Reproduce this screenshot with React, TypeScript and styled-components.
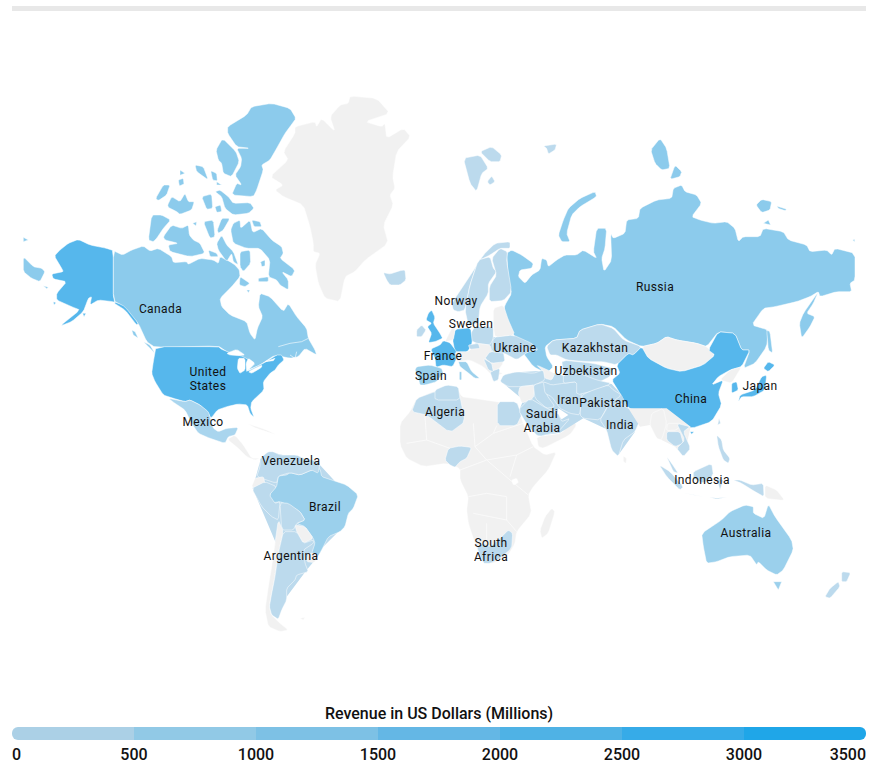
import React from "react";
import styled, { createGlobalStyle } from "styled-components";

const Global = createGlobalStyle`
  html, body { margin: 0; padding: 0; background: #fff; }
  body { font-family: Roboto, "Liberation Sans", sans-serif; }
`;

const Page = styled.main`
  width: 875px;
  height: 767px;
  overflow: hidden;
  display: flex;
  flex-direction: column;
`;
const TopBar = styled.div`
  height: 5px;
  margin: 6px 9px 0 12px;
  background: #e8e8e8;
  flex: none;
`;
const MapSvg = styled.svg`
  display: block;
  width: 875px;
  height: 693px;
  flex: none;
`;
const Land = styled.polygon<{ $tone: string }>`
  fill: ${(p) => p.$tone};
  stroke: #fff;
  stroke-width: 0.5;
  stroke-linejoin: round;
  vector-effect: non-scaling-stroke;
`;
const Backing = styled.polygon<{ $tone: string }>`
  fill: ${(p) => p.$tone};
`;
const Border = styled.polyline`
  fill: none;
  stroke: #fff;
  stroke-width: 0.6;
  vector-effect: non-scaling-stroke;
`;
const Label = styled.text`
  font-family: Roboto, sans-serif;
  font-size: 12px;
  letter-spacing: 0.4px;
  fill: #111;
  text-anchor: middle;
`;
const Legend = styled.section`
  display: flex;
  flex-direction: column;
  padding: 0 9px 0 12px;
  color: #111;
  font-weight: 500;
  font-size: 16px;
`;
const LegendTitle = styled.div`
  text-align: center;
  line-height: 20px;
  margin-bottom: 3px;
`;
const Scale = styled.div`
  display: flex;
  height: 13px;
  border-radius: 6px;
  overflow: hidden;
`;
const Step = styled.div<{ $tone: string }>`
  flex: 1;
  background: ${(p) => p.$tone};
`;
const Ticks = styled.div`
  display: flex;
  justify-content: space-between;
  margin-top: 5px;
  line-height: 19px;
`;
const Tick = styled.div<{ $align: string }>`
  width: 0;
  display: flex;
  justify-content: ${(p) => p.$align};
  white-space: nowrap;
`;

const CA = "#8ccbec";
const US = "#56b7ec";
const LT = "#bcdaed";
const BR = "#9bd0ec";
const MX = "#a9d5ee";
const GR = "#f1f1f1";
const WH = "#ffffff";

type Shape = [string, string];
type Frame = { x: number; y: number; backing?: Shape[]; shapes: Shape[]; lines?: string[] };

const frames: Frame[] = [
  {
    x: 0,
    y: 80,
    shapes: [
      [GR, "810,290 865,240 850,215 885,160 885,140 945,125 950,140 965,115 1005,155 990,110 1020,75 1045,70 1050,48 1130,55 1170,100 1095,125 1145,140 1155,130 1160,175 1210,145 1232,170 1190,215 1178,290 1185,325 1170,345 1180,375 1150,435 1165,490 1095,540 1065,575 1035,590 1020,665 975,655 955,610 945,555 960,520 940,515 940,490 930,440 910,375 850,350 825,330 850,315"],
      [US, "340,512 320,505 270,495 235,478 205,490 180,510 163,528 185,565 190,575 155,582 160,597 200,605 170,640 170,660 215,680 240,690 180,738 215,725 250,695 265,655 275,650 270,675 295,660 340,665 385,678 415,730 410,735 375,690 340,668"],
      [US, "248,700 258,700 252,710"],
      [US, "160,665 168,668 162,674"],
      [CA, "70,530 100,560 125,565 135,575 120,605 95,595 70,575"],
      [CA, "70,472 85,480 70,485"],
      [CA, "130,617 145,622 140,626"],
      [CA, "340,512 368,525 395,510 430,498 450,513 475,505 515,530 520,548 560,545 565,553 600,535 640,540 655,550 660,530 690,545 705,555 718,570 720,590 695,620 660,655 665,680 690,705 740,725 750,760 765,780 772,745 788,710 775,680 780,640 810,650 850,695 865,670 890,710 920,745 925,775 945,810 950,825 915,805 895,830 870,835 825,825 780,855 745,870 720,840 680,815 655,798 465,802 440,785 415,730 375,680 340,662"],
      [CA, "395,750 405,755 415,775 400,765"],
      [CA, "430,785 450,795 465,820 445,800"],
      [CA, "683,140 740,105 755,80 815,70 870,85 888,115 870,140 855,160 830,205 810,240 785,255 790,270 770,330 760,350 695,345 710,310 725,315 705,285 722,260 725,235 710,205 750,205 710,200 683,160"],
      [CA, "648,210 668,175 708,215 718,245 695,290 670,280 665,250 655,240"],
      [CA, "585,255 610,260 625,300 590,275"],
      [CA, "632,272 650,280 652,303 638,300"],
      [CA, "650,305 665,315 650,315"],
      [CA, "540,270 555,280 540,286"],
      [CA, "535,300 550,295 552,312 538,318"],
      [CA, "467,355 490,315 510,315 500,345 475,362"],
      [CA, "503,375 515,350 540,365 555,340 565,365 583,365 575,390 540,403 530,395 505,382"],
      [CA, "605,350 635,342 638,385 620,388"],
      [CA, "645,380 662,375 665,395 650,397"],
      [CA, "645,335 660,330 685,350 700,370 750,368 762,385 745,400 700,405 675,385 665,350"],
      [CA, "445,480 455,405 485,405 512,420 490,445 470,475 460,485"],
      [CA, "490,470 515,435 545,445 565,435 568,465 580,480 600,490 615,520 570,530 510,515 505,495 535,490 495,480"],
      [CA, "578,430 590,425 588,438"],
      [CA, "610,425 640,420 645,470 630,475"],
      [CA, "652,450 665,415 690,415 670,450 655,460"],
      [CA, "650,490 665,465 680,495 700,515 715,555 700,545 695,520 680,545 655,510"],
      [CA, "720,515 750,510 752,550 730,575 720,560"],
      [CA, "625,510 650,520 655,530 630,530"],
      [CA, "692,450 700,430 720,420 722,445 750,420 758,458 785,445 815,480 845,500 850,520 840,535 885,570 875,590 845,575 865,600 865,630 840,615 830,600 805,590 810,540 780,505 740,505 700,490"],
      [CA, "755,420 780,425 785,440 762,440"],
      [CA, "782,545 795,540 795,558 785,560"],
      [CA, "720,590 750,610 735,620 718,615"],
      [CA, "740,630 750,630 745,638"],
      [CA, "775,595 805,590 805,605 775,605"],
    ],
    lines: ["835,800 870,790 905,785", "870,825 885,835 890,815", "925,775 905,785"],
  },
  {
    x: 130,
    y: 340,
    shapes: [
      [US, "78,20 265,20 275,28 300,38 340,50 375,70 350,95 400,70 440,45 455,45 462,60 445,75 435,90 420,100 400,125 402,150 365,185 362,205 372,232 360,220 352,195 325,192 290,200 262,210 243,235 232,215 210,195 180,180 165,185 130,175 100,165 75,125 65,100 70,65"],
      [MX, "115,175 165,185 180,180 210,195 235,215 243,240 250,265 265,275 290,265 325,262 315,285 295,290 285,310 240,295 205,280 185,250 165,210 135,190"],
      [WH, "128,185 150,215 170,242 150,225"],
      [WH, "290,40 320,28 345,45 325,47 300,45"],
      [WH, "325,55 345,55 345,90 330,100 322,85"],
      [WH, "355,55 375,70 355,90 350,95 348,70"],
      [WH, "355,95 395,75 395,82 365,100"],
      [WH, "405,65 435,55 430,62"],
    ],
  },
  {
    x: 140,
    y: 380,
    backing: [[LT, "338,325 362,238 400,218 535,250 600,320 640,350 610,440 540,510 525,540 500,570 440,650 415,712 398,700 408,490"]],
    shapes: [
      [GR, "262,178 285,165 310,195 335,235 360,235 345,240 320,230 295,205"],
      [GR, "320,130 380,150 410,165 350,145"],
      [BR, "415,288 440,285 450,278 480,285 515,270 540,265 545,290 575,300 620,315 655,345 640,385 625,400 615,440 600,455 565,470 545,510 525,545 515,520 525,490 520,475 495,440 470,430 495,420 480,395 445,375 420,365 400,368 388,350 395,330 410,320"],
      [LT, "360,235 385,215 400,215 420,225 470,225 490,235 540,245 535,280 515,270 480,285 450,278 415,288 410,310 350,290 360,260"],
      [GR, "335,320 345,295 370,290 375,310 350,325"],
      [LT, "335,325 375,305 410,320 388,345 405,370 420,365 415,420 395,410 365,380"],
      [LT, "420,368 445,370 480,395 495,420 470,430 460,450 425,450"],
      [GR, "465,435 495,440 520,475 490,490 470,455"],
      [GR, "505,520 530,520 525,548 500,545"],
      [GR, "415,420 430,455 415,520 405,590 395,640 388,680 395,705 420,730 445,750 420,755 385,740 375,690 385,620 395,560 405,490"],
      [LT, "430,455 470,455 490,490 520,480 520,490 490,510 495,550 505,575 470,585 465,600 440,625 440,660 425,690 415,718 395,705 388,680 395,640 405,590 415,520"],
      [GR, "830,55 880,35 950,18 965,50 1000,55 1070,65 1130,75 1150,130 1180,200 1215,225 1250,215 1225,270 1180,320 1165,345 1175,400 1130,455 1125,490 1105,525 1060,550 1030,550 1005,490 985,430 980,390 985,350 960,300 960,265 920,250 850,260 800,235 780,195 780,130 810,95"],
      [LT, "815,95 830,55 885,35 950,18 960,50 975,125 930,158 860,105"],
      [LT, "1072,65 1130,65 1145,105 1130,137 1072,137"],
      [LT, "925,205 960,198 995,202 980,235 960,245 945,262 930,255 915,240"],
      [LT, "1085,470 1105,450 1118,460 1115,505 1080,535 1050,550 1030,550 1010,500 1030,490 1050,500"],
      [GR, "1235,385 1245,395 1225,460 1205,475 1200,450 1215,410"],
      [WH, "1115,300 1130,295 1135,308 1120,315"],
      [GR, "1190,170 1265,160 1295,120 1310,135 1290,165 1210,205 1195,200"],
      [GR, "480,715 495,712 490,720"],
    ],
    lines: [
      "855,110 860,180 800,190",
      "860,180 930,205",
      "1000,130 1005,200 1060,160 1070,137",
      "1005,200 1040,240 1130,225 1180,200",
      "960,270 1040,240 1110,300 1165,345",
      "985,350 1040,340 1100,350 1100,420 1130,455",
      "1000,400 1100,420",
      "1040,430 1040,490",
      "1130,225 1110,290",
      "1060,160 1150,130",
    ],
  },
  {
    x: 380,
    y: 120,
    shapes: [
      [CA, "370,575 375,555 395,520 385,480 380,400 395,390 425,405 460,430 455,445 420,450 415,470 435,490 455,465 480,450 485,415 500,420 505,440 530,420 555,405 590,405 610,390 650,415 640,395 650,325 680,325 675,385 665,415 672,455 695,420 692,340 700,355 735,340 740,300 775,295 780,265 830,240 875,235 880,205 905,195 915,215 950,225 965,250 935,290 960,300 1000,310 1040,305 1065,325 1075,365 1090,350 1140,350 1150,325 1210,335 1225,360 1280,375 1290,395 1340,390 1355,405 1365,385 1425,400 1425,480 1410,490 1415,515 1370,515 1320,530 1315,515 1290,530 1250,545 1185,560 1150,565 1115,615 1165,630 1160,680 1125,730 1090,745 1110,690 1085,690 1065,640 1015,635 980,680 950,670 890,660 860,650 830,670 785,680 740,660 700,620 660,612 600,630 590,655 520,660 495,680 500,710 520,740 500,760 460,740 430,700 400,640 370,620"],
      [CA, "1315,515 1300,550 1280,580 1305,590 1290,620 1265,655 1258,610 1270,580"],
      [CA, "1160,630 1170,635 1178,700 1165,690"],
      [CA, "535,345 550,300 565,265 600,235 645,215 650,230 600,260 575,285 560,340 570,365 545,365"],
      [CA, "812,90 840,55 860,85 870,145 845,150 825,130"],
      [CA, "870,178 885,135 905,155 900,170"],
      [CA, "1128,255 1145,238 1175,245 1170,270 1145,278"],
      [CA, "1190,258 1220,268 1215,272 1195,265"],
      [CA, "1150,310 1165,300 1172,315"],
      [CA, "1418,360 1424,358 1424,366"],
      [LT, "250,115 300,105 325,145 305,160 290,215 270,190"],
      [LT, "300,95 335,80 365,105 360,125 330,125"],
      [LT, "322,185 335,168 345,185 330,195"],
      [LT, "490,78 530,72 525,90 505,102 500,85"],
      [LT, "10,458 30,462 60,452 75,450 78,480 60,495 30,495 20,480"],
      [LT, "500,680 520,660 590,655 600,630 660,612 700,625 730,660 785,680 760,705 745,700 710,735 670,725 620,725 560,720 530,705 510,705"],
      [LT, "545,720 640,730 700,745 690,770 650,790 600,770 560,770 550,760"],
      [GR, "785,680 830,670 860,650 890,660 950,670 980,680 1005,705 970,735 905,755 860,745 805,715"],
      [US, "1015,635 1065,640 1085,690 1110,690 1085,740 1050,750 1015,770 995,795 1030,780 1015,820 1025,855 995,905 935,925 910,910 860,915 860,875 790,875 745,865 720,820 695,780 720,760 710,735 745,700 760,705 785,680 805,715 860,745 905,755 970,735 1005,705 985,690"],
      [GR, "1020,780 1050,750 1085,740 1055,790"],
      [US, "1055,790 1070,785 1075,810 1055,820"],
      [US, "1150,745 1165,725 1185,735 1165,755"],
      [US, "1145,770 1160,765 1155,810 1120,830 1085,830 1075,845 1080,825 1125,810"],
      [US, "930,935 942,935 935,943"],
    ],
  },
  {
    x: 480,
    y: 340,
    backing: [
      [LT, "70,130 110,97 190,92 250,107 395,132 425,165 445,205 465,275 415,345 385,270 310,235 240,278 175,288 118,210 130,180"],
      [WH, "235,205 265,225 245,238 232,222"],
    ],
    shapes: [
      [GR, "170,75 225,100 215,120 195,115 185,90"],
      [LT, "60,125 70,105 110,95 160,100 190,90 195,120 165,135 120,140 85,140"],
      [GR, "120,140 165,135 160,175 125,190 115,160"],
      [LT, "160,135 195,125 200,165 225,200 200,205 165,175"],
      [LT, "190,125 215,135 250,130 290,125 305,165 300,225 270,220 240,205 215,170 195,160"],
      [LT, "250,105 300,100 350,120 395,130 350,150 290,165 290,125 250,130"],
      [LT, "300,225 305,165 340,150 385,135 400,150 425,165 385,195 360,240 310,235"],
      [LT, "115,210 150,175 200,205 235,220 245,245 270,235 235,275 175,290 145,260"],
      [LT, "360,240 375,215 385,195 420,190 445,205 500,230 480,240 465,275 430,300 415,350 395,330 380,270"],
    ],
  },
  {
    x: 400,
    y: 230,
    backing: [[LT, "215,345 280,322 340,318 395,342 385,365 350,388 315,370 275,365"]],
    shapes: [
      [LT, "160,240 155,220 215,130 250,75 285,40 330,35 330,55 300,55 270,75 240,90 225,120 210,165 195,240 175,245"],
      [LT, "195,240 210,165 235,90 270,80 280,115 290,125 265,160 265,190 240,230 235,280 205,285"],
      [LT, "300,55 322,65 320,95 335,185 310,212 268,215 268,170 290,135 275,85"],
      [GR, "280,235 310,225 325,270 345,315 285,322 280,290"],
      [LT, "215,305 225,290 280,290 280,325 270,345 230,340 210,330"],
      [US, "165,298 212,293 217,340 202,367 165,367 158,330"],
      [US, "85,250 95,240 105,262 100,280 120,310 128,325 105,335 85,338 95,310 82,290 95,280 78,270"],
      [LT, "50,300 65,285 78,300 65,320 50,320"],
      [GR, "160,285 165,300 160,330 135,335 150,305"],
      [US, "130,332 150,338 170,365 170,385 158,410 130,405 108,412 105,385 92,357 120,345"],
      [BR, "50,410 90,405 125,415 130,430 110,455 75,465 60,465 55,445 45,420"],
      [GR, "165,365 205,365 230,340 270,345 275,365 300,380 310,400 290,425 310,430 280,440 250,410 210,390 170,395"],
      [LT, "270,365 310,365 315,395 275,400 255,385"],
      [LT, "205,345 235,340 240,355 210,358"],
      [LT, "270,425 300,415 295,450 280,455"],
      [LT, "250,385 275,400 280,425 265,420"],
      [BR, "175,395 200,395 215,425 240,445 225,445 200,425 180,410"],
      [BR, "178,425 185,425 185,450 178,450"],
      [LT, "280,322 340,315 395,340 415,360 385,365 350,390 315,370 275,365"],
      [LT, "105,480 140,465 175,470 180,510 105,510"],
    ],
  },
  {
    x: 560,
    y: 380,
    backing: [[GR, "205,85 320,85 392,140 372,228 345,200 305,180 270,135 240,140"]],
    shapes: [
      [GR, "190,228 200,235 198,250 190,245"],
      [GR, "275,100 310,85 320,130 305,180 290,175 270,135"],
      [LT, "320,155 360,155 370,190 345,200 320,180"],
      [GR, "322,130 365,130 350,150 320,152"],
      [LT, "350,130 390,140 370,155 392,205 370,230 350,205 375,180"],
      [LT, "320,230 335,250 355,280 340,275"],
      [LT, "298,255 330,275 370,320 360,330 320,290"],
      [LT, "400,275 455,250 460,285 430,310 400,295"],
      [LT, "370,338 430,350 400,345"],
      [LT, "445,350 470,355 505,350 470,358"],
      [LT, "470,295 490,300 480,330"],
      [LT, "520,300 540,300 575,315 610,310 612,350 585,335 545,310"],
      [GR, "615,315 650,330 675,362 615,355"],
      [LT, "470,165 485,180 490,210 510,235 505,250 490,240 475,200"],
      [LT, "477,115 482,130 473,135"],
      [BR, "425,460 485,420 510,395 555,375 580,380 580,400 612,415 625,372 645,410 695,480 700,510 670,570 650,585 620,570 595,545 590,555 570,525 510,530 470,545 440,550 430,500"],
      [BR, "640,605 665,605 655,630"],
      [LT, "845,575 872,578 860,605 845,605"],
      [LT, "835,605 840,620 810,655 795,650 810,625"],
    ],
  },
];

/* Cut each corner a little so coastlines read as curves rather than facets. */
function soften(points: string): string {
  const pts = points.split(" ").map((p) => p.split(",").map(Number));
  if (pts.length < 4) return points;
  const r = 0.14;
  const out: string[] = [];
  pts.forEach((a, i) => {
    const b = pts[(i + 1) % pts.length];
    out.push(`${a[0] + (b[0] - a[0]) * r},${a[1] + (b[1] - a[1]) * r}`);
    out.push(`${a[0] + (b[0] - a[0]) * (1 - r)},${a[1] + (b[1] - a[1]) * (1 - r)}`);
  });
  return out.join(" ");
}

const labels: Array<[string, number, number]> = [
  ["Canada", 160.5, 313], ["Russia", 655, 291], ["United", 208, 376], ["States", 208, 390],
  ["Mexico", 203, 426], ["Norway", 456, 305], ["Sweden", 471, 328], ["France", 443, 360],
  ["Spain", 431, 380], ["Ukraine", 515, 352], ["Kazakhstan", 595, 352], ["Uzbekistan", 586, 375],
  ["Iran", 568, 404], ["Pakistan", 604, 407], ["Algeria", 445, 416], ["Saudi", 542, 418],
  ["Arabia", 542, 432], ["India", 620, 429], ["China", 691, 403], ["Japan", 760, 390],
  ["Indonesia", 702, 484], ["Australia", 746, 537], ["Venezuela", 291, 465], ["Brazil", 325, 511],
  ["Argentina", 291, 560], ["South", 491, 547], ["Africa", 491, 561],
];

const scale = ["#abd0e6", "#91c9e6", "#7dc1e5", "#64b7e5", "#4fb2e5", "#36abe8", "#1fa6e8"];
const ticks = ["0", "500", "1000", "1500", "2000", "2500", "3000", "3500"];

export default function App() {
  return (
    <Page>
      <Global />
      <TopBar />
      <MapSvg viewBox="0 11 875 693" aria-label="World map">
        {frames.map((f, i) => (
          <g key={i} transform={`translate(${f.x} ${f.y}) scale(${1 / 3})`}>
            {f.backing?.map(([tone, points], j) => (
              <Backing key={j} $tone={tone} points={points} />
            ))}
            {f.shapes.map(([tone, points], j) => (
              <Land key={j} $tone={tone} points={soften(points)} />
            ))}
            {f.lines?.map((points, j) => <Border key={j} points={points} />)}
          </g>
        ))}
        {labels.map(([text, x, y]) => (
          <Label key={text} x={x} y={y}>{text}</Label>
        ))}
      </MapSvg>
      <Legend>
        <LegendTitle>Revenue in US Dollars (Millions)</LegendTitle>
        <Scale>
          {scale.map((tone) => <Step key={tone} $tone={tone} />)}
        </Scale>
        <Ticks>
          {ticks.map((t, i) => (
            <Tick key={t} $align={i === 0 ? "flex-start" : i === ticks.length - 1 ? "flex-end" : "center"}>{t}</Tick>
          ))}
        </Ticks>
      </Legend>
    </Page>
  );
}
